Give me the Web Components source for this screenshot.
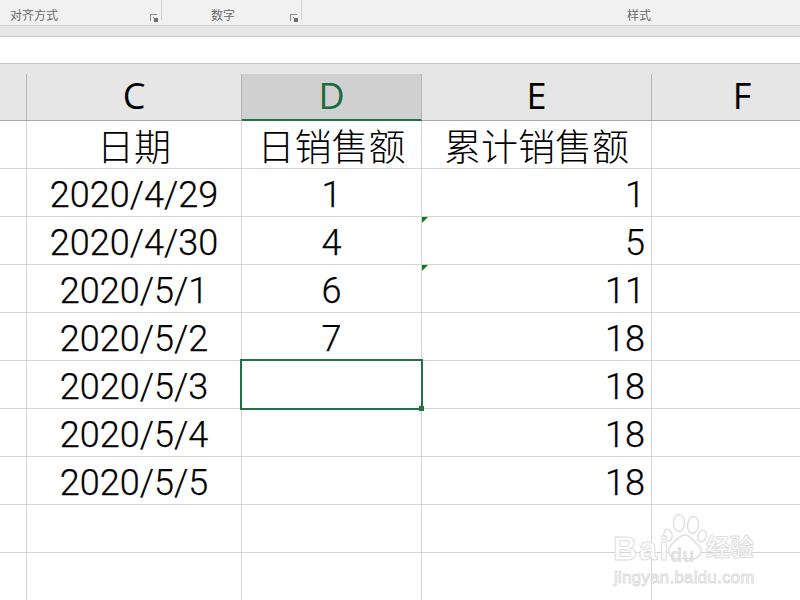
<!DOCTYPE html>
<html>
<head>
<meta charset="utf-8">
<style>
  html, body { margin: 0; padding: 0; background: #fff; overflow: hidden; }
  body { width: 800px; height: 600px; position: relative; font-family: "Liberation Sans", "Noto Sans CJK SC", sans-serif; }
</style>
</head>
<body>
<ribbon-bar></ribbon-bar>
<formula-bar></formula-bar>
<sheet-grid></sheet-grid>
<jingyan-mark></jingyan-mark>

<script>
class RibbonBar extends HTMLElement {
  constructor() {
    super();
    this.shadowDOM = this.attachShadow({ mode: "open" });
    const launcher = `<svg class="launcher" width="8" height="8" viewBox="0 0 8 8">
      <path d="M.5 7V.5H7" fill="none" stroke="#8a8a8a"/><rect x="4" y="4" width="4" height="4" fill="#6f6f6f"/><rect x="3" y="3" width="1" height="1" fill="#8a8a8a"/></svg>`;
    this.shadowDOM.innerHTML = `<style>
    :host {
      display: flex;
      height: 25px;
      background-color: #f1f1f1;
      border-bottom: 1px solid #d2d2d2;
      font: 12px "Noto Sans CJK SC", sans-serif;
      color: #6a6a6a;
    }
    .group {
      position: relative;
      height: 20px;
      line-height: 29px;
      box-sizing: border-box;
      border-right: 1px solid #d2d2d2;
      white-space: nowrap;
    }
    .align { width: 162px; padding-left: 10px; }
    .number { width: 140px; padding-left: 49px; }
    .style { width: 498px; padding-left: 325px; border-right: 0; }
    .launcher { position: absolute; right: 3px; top: 14px; }
    </style>
    <div class="group align">对齐方式${launcher}</div>
    <div class="group number">数字${launcher}</div>
    <div class="group style">样式</div>
    `;
  }
}

class FormulaBar extends HTMLElement {
  constructor() {
    super();
    this.shadowDOM = this.attachShadow({ mode: "open" });
    this.shadowDOM.innerHTML = `<style>
    :host { display: block; }
    .gap { height: 10px; background-color: #e6e6e6; border-bottom: 1px solid #c6c6c6; }
    .input { height: 26px; background-color: #fff; border-bottom: 1px solid #c6c6c6; }
    </style>
    <div class="gap"></div>
    <div class="input"></div>
    `;
  }
}

class ColHead extends HTMLElement {
  constructor() {
    super();
    this.shadowDOM = this.attachShadow({ mode: "open" });
    this.shadowDOM.innerHTML = `<style>
    :host {
      display: flex;
      align-items: center;
      justify-content: center;
      box-sizing: border-box;
      margin-top: 10px;
      border-right: 1px solid #b4b4b4;
      border-bottom: 1px solid #a6a6a6;
      font: 36px "Open Sans", sans-serif;
      color: #000;
      line-height: 44px;
      padding-bottom: 2px;
    }
    :host([active]) {
      background-color: #d0d0d0;
      color: #1c6b3e;
      border-bottom: 2px solid #217346;
      padding-bottom: 1px;
    }
    :host([plain]) { border-right: 0; }
    </style><slot></slot>`;
  }
}

class GridCell extends HTMLElement {
  constructor() {
    super();
    this.shadowDOM = this.attachShadow({ mode: "open" });
    this.shadowDOM.innerHTML = `<style>
    :host {
      display: flex;
      align-items: center;
      justify-content: center;
      position: relative;
      box-sizing: border-box;
      border-right: 1px solid #d4d4d4;
      border-bottom: 1px solid #d4d4d4;
      padding-top: 4px;
      font: 300 36px Roboto, "Noto Sans CJK SC", sans-serif;
      -webkit-text-stroke: 0.25px #000;
      color: #000;
      white-space: nowrap;
    }
    :host([num]) { justify-content: flex-end; padding-right: 6px; }
    :host([label]) { font: 300 37px "Noto Sans CJK SC", sans-serif; -webkit-text-stroke: 0; padding-top: 0; }
    :host([last]) { border-right: 0; }
    .flag {
      position: absolute;
      right: -7px;
      top: 0;
      width: 0;
      height: 0;
      border-top: 6px solid #107c10;
      border-right: 6px solid transparent;
      z-index: 2;
    }
    .picked {
      position: absolute;
      left: -2px;
      top: -2px;
      right: -2px;
      bottom: -2px;
      border: 2px solid #217346;
      z-index: 3;
    }
    .handle {
      position: absolute;
      right: -3px;
      bottom: -3px;
      width: 5px;
      height: 5px;
      background-color: #217346;
    }
    </style><slot></slot>`;
    if (this.hasAttribute("flag")) {
      this.shadowDOM.innerHTML += `<span class="flag"></span>`;
    }
    if (this.hasAttribute("picked")) {
      this.shadowDOM.innerHTML += `<div class="picked"><div class="handle"></div></div>`;
    }
  }
}

class SheetGrid extends HTMLElement {
  constructor() {
    super();
    this.shadowDOM = this.attachShadow({ mode: "open" });
    const rows = [
      ["2020/4/29", "1", "1", ""],
      ["2020/4/30", "4", "5", "flag"],
      ["2020/5/1", "6", "11", "flag"],
      ["2020/5/2", "7", "18", ""],
      ["2020/5/3", "", "18", "picked"],
      ["2020/5/4", "", "18", ""],
      ["2020/5/5", "", "18", ""],
      ["", "", "", ""],
      ["", "", "", ""],
    ];
    const body = rows.map(([date, day, total, mark]) => `
      <grid-cell></grid-cell>
      <grid-cell>${date}</grid-cell>
      <grid-cell ${mark}>${day}</grid-cell>
      <grid-cell num>${total}</grid-cell>
      <grid-cell last></grid-cell>`).join("");
    this.shadowDOM.innerHTML = `<style>
    :host {
      display: grid;
      grid-template-columns: 27px 215px 180px 230px 180px;
      grid-template-rows: 57px repeat(10, 48px);
      background: linear-gradient(#e6e6e6 57px, #fff 57px);
    }
    </style>
    <col-head></col-head>
    <col-head>C</col-head>
    <col-head active>D</col-head>
    <col-head>E</col-head>
    <col-head plain>F</col-head>
    <grid-cell></grid-cell>
    <grid-cell label>日期</grid-cell>
    <grid-cell label>日销售额</grid-cell>
    <grid-cell label>累计销售额</grid-cell>
    <grid-cell last></grid-cell>
    ${body}
    `;
  }
}

class JingyanMark extends HTMLElement {
  constructor() {
    super();
    this.shadowDOM = this.attachShadow({ mode: "open" });
    this.shadowDOM.innerHTML = `<style>
    :host {
      position: absolute;
      left: 612px;
      top: 512px;
      width: 150px;
      height: 74px;
      font-family: "Liberation Sans", "Noto Sans CJK SC", sans-serif;
      font-weight: 700;
      color: rgba(255, 255, 255, 0.9);
      -webkit-text-stroke: 1px #dedede;
      white-space: nowrap;
    }
    span { position: absolute; line-height: 1; }
    .bai { left: 1px; top: 20px; font-size: 33px; letter-spacing: 2px; }
    .du { left: 58px; top: 33px; font-size: 20px; color: #e0e0e0; -webkit-text-stroke: 0; }
    .jy { left: 94px; top: 24px; font-size: 24px; }
    .url { left: 2px; top: 57px; font-size: 16.5px; letter-spacing: .45px; font-weight: 400; }
    svg { position: absolute; left: 51px; top: 1px; }
    </style>
    <svg width="44" height="48" viewBox="0 0 44 48" fill="#fff" stroke="#dedede" stroke-width="1.4">
      <ellipse cx="5" cy="22" rx="4" ry="6" transform="rotate(-15 5 22)"/>
      <ellipse cx="16" cy="10" rx="5.5" ry="8.5"/>
      <ellipse cx="30" cy="12" rx="5.5" ry="8.5" transform="rotate(8 30 12)"/>
      <ellipse cx="39" cy="23" rx="4" ry="6" transform="rotate(18 39 23)"/>
      <path d="M22 22c6 0 8 6 13 10 6 5 2 14-6 14-3 0-5-1-7-1s-4 1-7 1c-8 0-12-8-7-14 5-4 8-10 14-10z"/>
    </svg>
    <span class="bai">Bai</span>
    <span class="du">du</span>
    <span class="jy">经验</span>
    <span class="url">jingyan.baidu.com</span>
    `;
  }
}

customElements.define("ribbon-bar", RibbonBar);
customElements.define("formula-bar", FormulaBar);
customElements.define("col-head", ColHead);
customElements.define("grid-cell", GridCell);
customElements.define("sheet-grid", SheetGrid);
customElements.define("jingyan-mark", JingyanMark);
</script>
</body>
</html>
